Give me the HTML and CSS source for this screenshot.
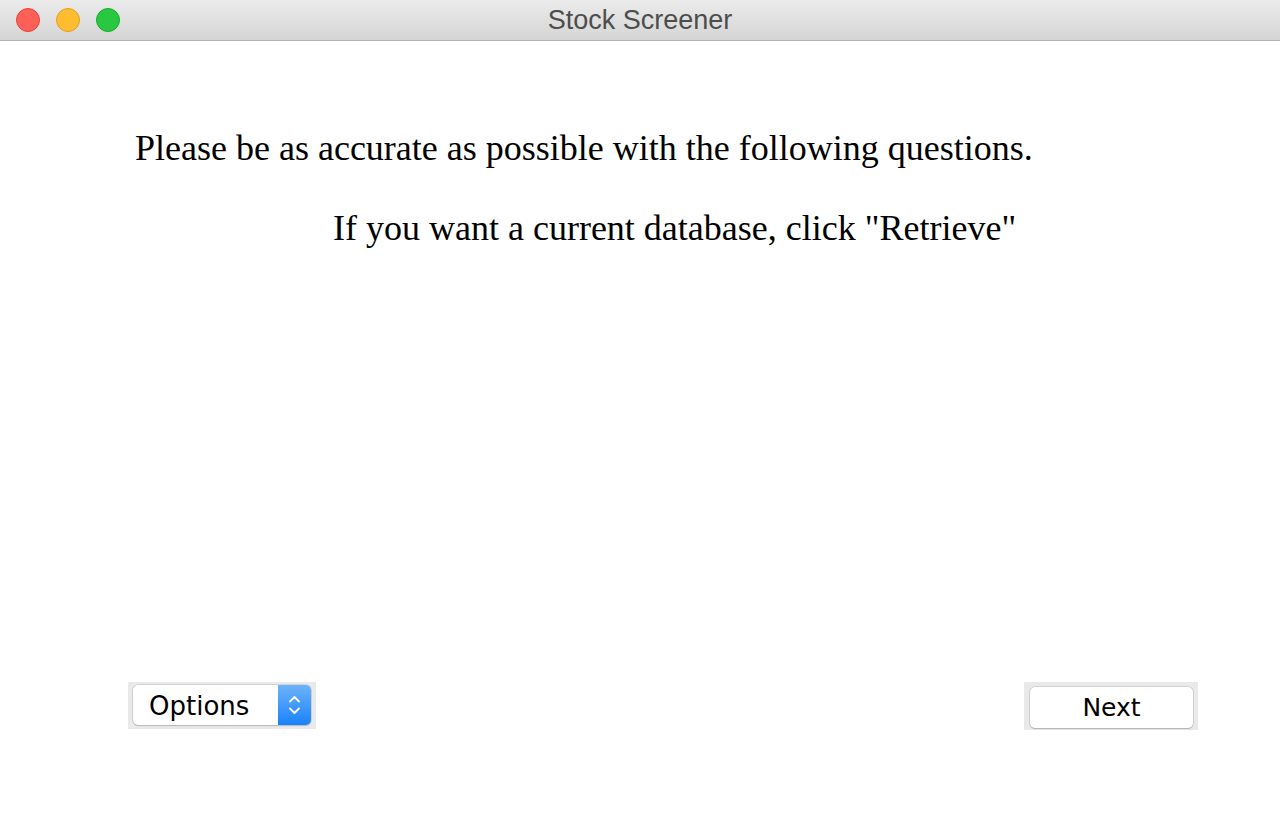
FILE: index.html
```html
<!DOCTYPE html>
<html>
<head>
<meta charset="utf-8">
<link rel="stylesheet" href="styles.css">
<title>Stock Screener</title>
</head>
<body>
<div class="window">
  <div class="titlebar">
    <div class="lights">
      <span class="light red"></span>
      <span class="light yellow"></span>
      <span class="light green"></span>
    </div>
    <div class="title">Stock Screener</div>
  </div>
  <div class="content">
    <p class="line1">Please be as accurate as possible with the following questions.</p>
    <p class="line2">If you want a current database, click "Retrieve"</p>
    <div class="spacer"></div>
    <div class="controls">
      <div class="well well-options">
        <div class="popup">
          <span class="popup-label">Options</span>
          <span class="popup-arrows">
            <svg width="15" height="22" viewBox="0 0 15 22"><path d="M3 7.5 L7.5 3 L12 7.5" fill="none" stroke="#fff" stroke-width="1.8" stroke-linecap="round" stroke-linejoin="round"/><path d="M3 14.5 L7.5 19 L12 14.5" fill="none" stroke="#fff" stroke-width="1.8" stroke-linecap="round" stroke-linejoin="round"/></svg>
          </span>
        </div>
      </div>
      <div class="well well-next">
        <button class="btn">Next</button>
      </div>
    </div>
  </div>
</div>
</body>
</html>
```
FILE: styles.css
```css
html, body {
  margin: 0;
  padding: 0;
  background: #ffffff;
}
.window {
  width: 1280px;
  height: 838px;
  display: flex;
  flex-direction: column;
  overflow: hidden;
}
.titlebar {
  height: 40px;
  flex: none;
  position: relative;
  background: linear-gradient(#ebebeb, #d5d5d5);
  border-bottom: 1px solid #b3b3b3;
  display: flex;
  align-items: center;
  justify-content: center;
}
.lights {
  position: absolute;
  left: 16px;
  top: 8px;
  display: flex;
  gap: 16px;
}
.light {
  width: 24px;
  height: 24px;
  border-radius: 50%;
  box-sizing: border-box;
}
.red { background: #fe5f57; border: 1px solid #e1463f; }
.yellow { background: #febc2e; border: 1px solid #dfa023; }
.green { background: #28c840; border: 1px solid #1daa2c; }
.title {
  font-family: "Liberation Sans", Arial, sans-serif;
  font-size: 27px;
  color: #4d4d4d;
  margin-top: 1px;
}
.content {
  flex: 1;
  display: flex;
  flex-direction: column;
  font-family: "Liberation Serif", "DejaVu Serif", serif;
  color: #000;
}
.line1 {
  margin: 87px 0 0 135px;
  font-size: 36px;
  line-height: 40px;
}
.line2 {
  margin: 40px 0 0 333px;
  font-size: 36px;
  line-height: 40px;
}
.spacer { flex: 1; }
.controls {
  display: flex;
  justify-content: space-between;
  padding: 0 82px 108px 128px;
}
.well {
  background: #e9e9e9;
  box-sizing: border-box;
}
.well-options {
  width: 188px;
  height: 47px;
  padding: 3px 5px 4px 5px;
}
.popup {
  height: 40px;
  display: flex;
  border-radius: 5px;
  background: #fff;
  box-shadow: 0 0 0 0.5px #b9b9b9, 0 1px 1px rgba(0,0,0,0.2);
  overflow: hidden;
}
.popup-label {
  flex: 1;
  font-family: "DejaVu Sans", "Liberation Sans", sans-serif;
  font-size: 26px;
  line-height: 42px;
  padding-left: 16px;
  color: #000;
}
.popup-arrows {
  width: 33px;
  background: linear-gradient(#6cb3fa, #1a82fb);
  display: flex;
  align-items: center;
  justify-content: center;
}
.well-next {
  width: 174px;
  height: 48px;
  padding: 5px 5px 2px 6px;
}
.btn {
  width: 163px;
  height: 41px;
  border: none;
  border-radius: 5px;
  background: #fff;
  box-shadow: 0 0 0 0.5px #b9b9b9, 0 1px 1px rgba(0,0,0,0.25);
  font-family: "DejaVu Sans", "Liberation Sans", sans-serif;
  font-size: 25px;
  color: #000;
  padding: 0;
}
```
